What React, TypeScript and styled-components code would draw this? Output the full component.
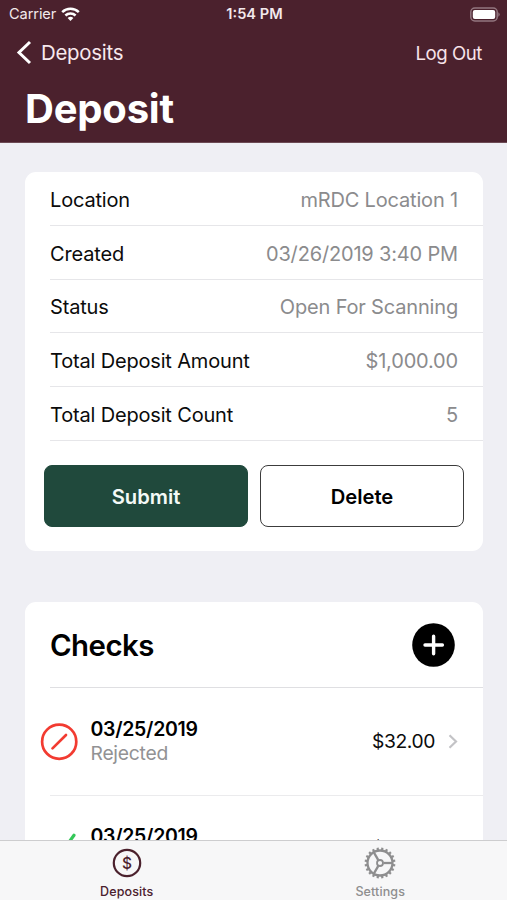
import React from "react";
import styled, { createGlobalStyle } from "styled-components";

const GlobalStyle = createGlobalStyle`
  *, *::before, *::after { box-sizing: border-box; }
  body { margin: 0; }
`;

const MAROON = "#4b212d";

const Screen = styled.div`
  display: flex;
  flex-direction: column;
  width: 507px;
  height: 900px;
  overflow: hidden;
  background: #efeff4;
  color: #0b0b0b;
  font-family: Inter, "Liberation Sans", sans-serif;
  font-size: 20px;
`;

const Header = styled.header`
  flex: none;
  height: 143px;
  background: ${MAROON};
  border-bottom: 1px solid #6c4a54;
  color: #fff;
`;

const StatusBar = styled.div`
  display: grid;
  grid-template-columns: 1fr auto 1fr;
  align-items: center;
  height: 27px;
  padding: 0 7px 0 9px;
  font-size: 14.6px;
  line-height: 28px;
  color: #f3e9ec;
`;

const Carrier = styled.div`
  display: flex;
  align-items: center;
  gap: 5px;
  letter-spacing: -0.1px;
`;

const Clock = styled.div`
  font-weight: 600;
`;

const Battery = styled.svg`
  justify-self: end;
`;

const NavBar = styled.nav`
  display: flex;
  align-items: center;
  justify-content: space-between;
  height: 51px;
  padding: 0 25px 0 16px;
`;

const BackButton = styled.button`
  display: flex;
  align-items: center;
  gap: 8px;
  padding: 0;
  border: 0;
  background: none;
  color: #f8e9ed;
  font: inherit;
  font-size: 20.4px;
  letter-spacing: -0.25px;
`;

const LogOut = styled.button`
  padding: 0;
  border: 0;
  background: none;
  color: #f8e3e9;
  font: inherit;
  font-size: 18.6px;
  letter-spacing: -0.45px;
`;

const Title = styled.h1`
  margin: 0;
  padding-left: 25px;
  font-size: 40px;
  font-weight: 700;
  line-height: 62px;
  letter-spacing: -0.2px;
`;

const Content = styled.main`
  flex: 1;
  min-height: 0;
  overflow: hidden;
  padding: 29px 24px 0 25px;
`;

const Card = styled.section`
  background: #fff;
  border-radius: 11px;

  & + & {
    margin-top: 51px;
  }
`;

const DetailRow = styled.div`
  display: flex;
  align-items: center;
  justify-content: space-between;
  height: 53.8px;
  margin-left: 25px;
  padding: 3px 25px 0 0;
  border-bottom: 1px solid #e6e6e9;
  letter-spacing: -0.17px;
`;

const DetailValue = styled.span`
  color: #8b8b8d;
`;

const Actions = styled.div`
  display: flex;
  gap: 12px;
  padding: 24px 19px;
`;

const ActionButton = styled.button<{ $primary?: boolean }>`
  flex: 1;
  height: 62px;
  padding: 1px 0 0;
  border: 1px solid ${(p) => (p.$primary ? "#20493c" : "#3c3c3c")};
  border-radius: 8px;
  background: ${(p) => (p.$primary ? "#20493c" : "#fff")};
  color: ${(p) => (p.$primary ? "#f4faf7" : "#000")};
  font: inherit;
  font-size: 20.2px;
  font-weight: 600;
`;

const ChecksHeader = styled.div`
  display: flex;
  align-items: center;
  justify-content: space-between;
  height: 86px;
  margin-left: 25px;
  padding: 2px 28px 0 0;
  border-bottom: 1px solid #dfdfe2;
`;

const ChecksTitle = styled.h2`
  margin: 0;
  color: #000;
  font-size: 29.4px;
  font-weight: 600;
  letter-spacing: -0.55px;
`;

const AddButton = styled.button`
  display: flex;
  padding: 0;
  border: 0;
  background: none;
`;

const CheckRow = styled.div`
  display: flex;
  height: 107px;
  padding-left: 15px;
`;

const StatusIcon = styled.svg`
  flex: none;
  align-self: center;
`;

const CheckInfo = styled.div`
  display: flex;
  flex: 1;
  flex-direction: column;
  justify-content: center;
  padding-left: 12.5px;
  line-height: 24px;
`;

const CheckDate = styled.div`
  color: #000;
  font-size: 19.5px;
  font-weight: 600;
  letter-spacing: -0.3px;
`;

const CheckState = styled.div`
  height: 24px;
  color: #929294;
  font-size: 19.3px;
  letter-spacing: -0.25px;
`;

const CheckAmount = styled.div`
  display: flex;
  align-items: center;
  gap: 13px;
  padding-right: 25px;
  font-size: 19.3px;
  letter-spacing: -0.4px;
`;

const CheckList = styled.div`
  ${CheckRow} + ${CheckRow} {
    background: linear-gradient(#ebebed, #ebebed) 25px 0 / 100% 1px no-repeat;
  }
`;

const TabBar = styled.footer`
  display: grid;
  grid-template-columns: 1fr 1fr;
  flex: none;
  height: 60px;
  border-top: 1px solid #cdcdcf;
  background: #f7f7f8;
`;

const Tab = styled.div<{ $active?: boolean }>`
  display: flex;
  flex-direction: column;
  align-items: center;
  padding-top: 6px;
  color: ${(p) => (p.$active ? MAROON : "#8e8e8f")};
  font-size: 12.5px;
  font-weight: 500;
  line-height: 21px;
  letter-spacing: 0.12px;
`;

const TabIcon = styled.svg`
  margin-bottom: 2px;
`;

const details = [
  ["Location", "mRDC Location 1"],
  ["Created", "03/26/2019 3:40 PM"],
  ["Status", "Open For Scanning"],
  ["Total Deposit Amount", "$1,000.00"],
  ["Total Deposit Count", "5"],
];

const checks = [
  { date: "03/25/2019", state: "Rejected", amount: "$32.00", ok: false },
  { date: "03/25/2019", state: "", amount: "$32.00", ok: true },
];

function WifiIcon() {
  return (
    <svg width="20" height="15" viewBox="0 0 20 15" fill="none" stroke="#fff" strokeWidth="2.5">
      <path d="M1.2 5.2a11.9 11.9 0 0 1 16.6 0" />
      <path d="M4.4 8.5a7.4 7.4 0 0 1 10.2 0" />
      <path d="M9.5 14 6.6 11.1a4.1 4.1 0 0 1 5.8 0Z" fill="#fff" stroke="none" />
    </svg>
  );
}

function GearIcon() {
  const teeth = Array.from({ length: 20 }, (_, i) => i * 18 + 9);
  return (
    <TabIcon width="32" height="32" viewBox="-16 -16 32 32" fill="none" stroke="currentColor">
      <circle r="12.5" strokeWidth="2.3" />
      <circle r="3" strokeWidth="1.8" />
      {teeth.map((a) => (
        <path key={a} d="M13 0H15.4" strokeWidth="2.2" transform={`rotate(${a})`} />
      ))}
      {[0, 120, 240].map((a) => (
        <path key={a} d="M3.4 0H12" strokeWidth="2.3" transform={`rotate(${a})`} />
      ))}
    </TabIcon>
  );
}

export default function App() {
  return (
    <>
      <GlobalStyle />
      <Screen>
        <Header>
          <StatusBar>
            <Carrier>
              Carrier
              <WifiIcon />
            </Carrier>
            <Clock>1:54 PM</Clock>
            <Battery width="31" height="15" viewBox="0 0 31 15">
              <rect x="1.8" y="1" width="26.4" height="13" rx="4" fill="none" stroke="#93767f" strokeWidth="1.5" />
              <rect x="3.8" y="3" width="22.4" height="9" rx="2" fill="#fff" />
              <path d="M29.3 5.2a2.6 2.6 0 0 1 0 4.6Z" fill="#93767f" />
            </Battery>
          </StatusBar>
          <NavBar>
            <BackButton>
              <svg width="17" height="26" viewBox="0 0 17 26" fill="none" stroke="#fff" strokeWidth="3">
                <path d="M14 2 3 12.5 14 23" />
              </svg>
              Deposits
            </BackButton>
            <LogOut>Log Out</LogOut>
          </NavBar>
          <Title>Deposit</Title>
        </Header>

        <Content>
          <Card>
            {details.map(([label, value]) => (
              <DetailRow key={label}>
                <span>{label}</span>
                <DetailValue>{value}</DetailValue>
              </DetailRow>
            ))}
            <Actions>
              <ActionButton $primary>Submit</ActionButton>
              <ActionButton>Delete</ActionButton>
            </Actions>
          </Card>

          <Card>
            <ChecksHeader>
              <ChecksTitle>Checks</ChecksTitle>
              <AddButton aria-label="Add check">
                <svg width="43" height="44" viewBox="0 0 43 44">
                  <ellipse cx="21.5" cy="22" rx="21.3" ry="21.8" />
                  <path d="M13 22h17.4M21.6 13.2v17.6" stroke="#fff" strokeWidth="3.4" strokeLinecap="round" />
                </svg>
              </AddButton>
            </ChecksHeader>
            <CheckList>
              {checks.map((check, i) => (
                <CheckRow key={i}>
                  <StatusIcon width="38" height="40" viewBox="0 0 38 40" fill="none" strokeLinecap="round">
                    {check.ok ? (
                      <path d="M8 24l7.5 9L34 7.2" stroke="#34c759" strokeWidth="3.2" />
                    ) : (
                      <g stroke="#f23b31" strokeWidth="2.7">
                        <circle cx="19.2" cy="20.7" r="17.1" />
                        <path d="M12.5 27.4 26 14" />
                      </g>
                    )}
                  </StatusIcon>
                  <CheckInfo>
                    <CheckDate>{check.date}</CheckDate>
                    <CheckState>{check.state}</CheckState>
                  </CheckInfo>
                  <CheckAmount>
                    {check.amount}
                    <svg width="10" height="15" viewBox="0 0 10 15" fill="none" stroke="#c3c3c6" strokeWidth="2.2">
                      <path d="M1.5 1.2 8 7.5 1.5 13.8" />
                    </svg>
                  </CheckAmount>
                </CheckRow>
              ))}
            </CheckList>
          </Card>
        </Content>

        <TabBar>
          <Tab $active>
            <TabIcon width="32" height="32" viewBox="-16 -16 32 32">
              <circle r="13.2" fill="none" stroke="currentColor" strokeWidth="2.2" />
              <text y="5.6" textAnchor="middle" fill="currentColor" fontSize="15.5" fontWeight="500" letterSpacing="0">
                $
              </text>
            </TabIcon>
            Deposits
          </Tab>
          <Tab>
            <GearIcon />
            Settings
          </Tab>
        </TabBar>
      </Screen>
    </>
  );
}
